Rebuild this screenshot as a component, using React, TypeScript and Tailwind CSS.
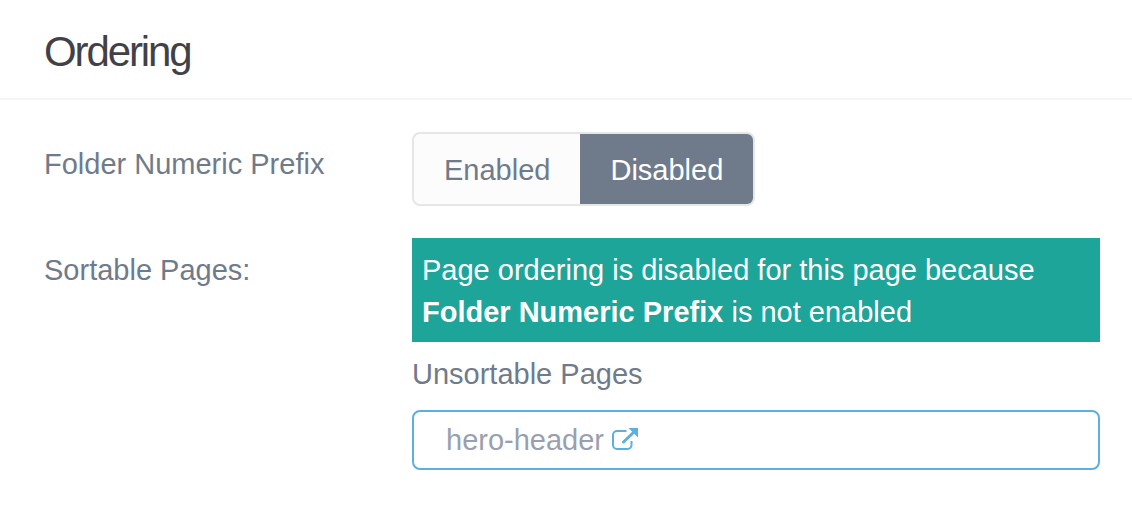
import React from "react";

function ExternalLinkIcon() {
  return (
    <svg viewBox="0 0 26 22" fill="none" className="h-[22px] w-[26px]" aria-hidden="true">
      <path
        d="M14.500 3H5a4 4 0 0 0-4 4v10a4 4 0 0 0 4 4h10.500a4 4 0 0 0 4-4v-4"
        stroke="currentColor"
        strokeWidth="2"
      />
      <path d="M16.500 0H26v9.500z" fill="currentColor" />
      <path d="M11.500 14L22.500 3.500" stroke="currentColor" strokeWidth="3" strokeLinecap="round" />
    </svg>
  );
}

export default function App() {
  const [prefix, setPrefix] = React.useState("disabled");
  const options = [
    { value: "enabled", label: "Enabled" },
    { value: "disabled", label: "Disabled" },
  ];
  return (
    <main className="bg-white pb-10 font-['Liberation_Sans',Arial,sans-serif] text-[29px] leading-[42px] text-[#6f7b8a]">
      <h1 className="border-b-2 border-[#f6f6f6] px-11 pt-[25px] pb-[19px] text-[42px] leading-[54px] tracking-tighter text-[#414147]">
        Ordering
      </h1>
      <div className="grid grid-cols-[368px_1fr] gap-y-8 pt-8 pr-8 pl-11">
        <div id="prefix-label" className="pt-[11px]">Folder Numeric Prefix</div>
        <div>
          <div
            role="radiogroup"
            aria-labelledby="prefix-label"
            className="inline-flex overflow-hidden rounded-lg border-2 border-[#e6e6e6] bg-[#fcfcfc] align-top"
          >
            {options.map((o) => (
              <label
                key={o.value}
                className="cursor-pointer px-[30px] pt-[15px] pb-[13px] has-checked:bg-[#6f7b8a] has-checked:text-white"
              >
                <input
                  type="radio"
                  name="prefix"
                  className="sr-only"
                  checked={prefix === o.value}
                  onChange={() => setPrefix(o.value)}
                />
                {o.label}
              </label>
            ))}
          </div>
        </div>
        <div className="pt-[11px]">Sortable Pages:</div>
        <div>
          <p className="bg-[#1ea59a] px-[10px] pt-[11px] pb-[9px] text-white">
            Page ordering is disabled for this page because <strong>Folder Numeric Prefix</strong> is not enabled
          </p>
          <h2 className="pt-[11px] pb-[15px]">Unsortable Pages</h2>
          <ul>
            <li className="flex items-center gap-2 rounded-lg border-2 border-[#5bb0e0] px-8 py-[7px] text-[#999fae]">
              hero-header
              <a href="#hero-header" aria-label="Open hero-header" className="pb-[2px] text-[#5bb0e0]">
                <ExternalLinkIcon />
              </a>
            </li>
          </ul>
        </div>
      </div>
    </main>
  );
}
